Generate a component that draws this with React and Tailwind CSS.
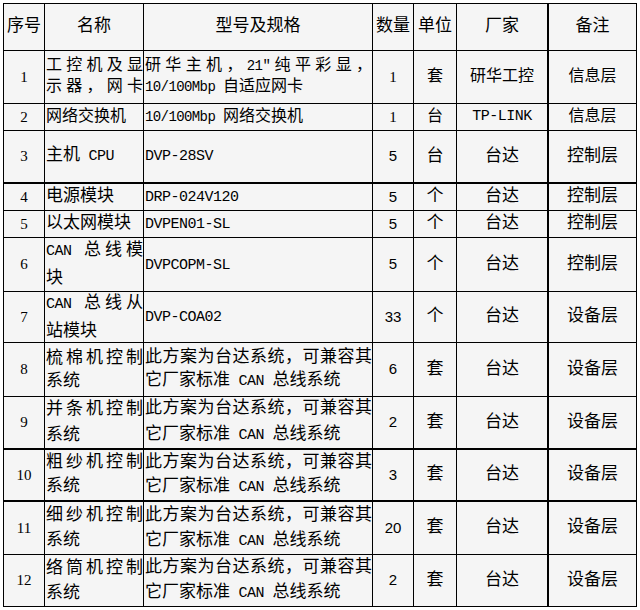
import React from "react";

const FONT = { fontFamily: '"Liberation Mono", "Noto Sans CJK SC", monospace' };

// split text into ASCII runs (rendered smaller in mono) and CJK runs
function Mix({ s, cls }) {
  const parts = s.split(/([\x00-\x7F\u2033]+)/);
  return (
    <>
      {parts.map((p, i) =>
        p === "" ? null : /[\x00-\x7F\u2033]/.test(p) ? (
          <span key={i} className={cls}>
            {p}
          </span>
        ) : (
          <React.Fragment key={i}>{p}</React.Fragment>
        )
      )}
    </>
  );
}

const rows = [
  {
    no: "1",
    name: [["工控机及显", 1], ["示器，网卡", 1]],
    spec: [["研华主机，21″纯平彩显，", 1], ["10/100Mbp 自适应网卡", 0]],
    qty: "1",
    unit: "套",
    maker: "研华工控",
    note: "信息层",
    small: true,
    lead: "leading-[21px]",
  },
  {
    no: "2",
    name: [["网络交换机", 0]],
    spec: [["10/100Mbp 网络交换机", 0]],
    qty: "1",
    unit: "台",
    maker: "TP-LINK",
    note: "信息层",
    small: true,
  },
  { no: "3", name: [["主机 CPU", 0]], spec: [["DVP-28SV", 0]], qty: "5", unit: "台", maker: "台达", note: "控制层", thick: true },
  { no: "4", name: [["电源模块", 0]], spec: [["DRP-024V120", 0]], qty: "5", unit: "个", maker: "台达", note: "控制层" },
  { no: "5", name: [["以太网模块", 0]], spec: [["DVPEN01-SL", 0]], qty: "5", unit: "个", maker: "台达", note: "控制层" },
  {
    no: "6",
    name: [["CAN 总线模", 1], ["块", 0]],
    spec: [["DVPCOPM-SL", 0]],
    qty: "5",
    unit: "个",
    maker: "台达",
    note: "控制层",
    lead: "leading-[27px]",
  },
  {
    no: "7",
    name: [["CAN 总线从", 1], ["站模块", 0]],
    spec: [["DVP-COA02", 0]],
    qty: "33",
    unit: "个",
    maker: "台达",
    note: "设备层",
    lead: "leading-[27px]",
  },
  {
    no: "8",
    name: [["梳棉机控制", 1], ["系统", 0]],
    spec: [["此方案为台达系统，可兼容其", 1], ["它厂家标准 CAN 总线系统", 0]],
    qty: "6",
    unit: "套",
    maker: "台达",
    note: "设备层",
    lead: "leading-[23px]",
  },
  {
    no: "9",
    name: [["并条机控制", 1], ["系统", 0]],
    spec: [["此方案为台达系统，可兼容其", 1], ["它厂家标准 CAN 总线系统", 0]],
    qty: "2",
    unit: "套",
    maker: "台达",
    note: "设备层",
    thick: true,
    lead: "leading-[26px]",
  },
  {
    no: "10",
    name: [["粗纱机控制", 1], ["系统", 0]],
    spec: [["此方案为台达系统，可兼容其", 1], ["它厂家标准 CAN 总线系统", 0]],
    qty: "3",
    unit: "套",
    maker: "台达",
    note: "设备层",
    thick: true,
    lead: "leading-[24px]",
  },
  {
    no: "11",
    name: [["细纱机控制", 1], ["系统", 0]],
    spec: [["此方案为台达系统，可兼容其", 1], ["它厂家标准 CAN 总线系统", 0]],
    qty: "20",
    unit: "套",
    maker: "台达",
    note: "设备层",
    lead: "leading-[25px]",
  },
  {
    no: "12",
    name: [["络筒机控制", 1], ["系统", 0]],
    spec: [["此方案为台达系统，可兼容其", 1], ["它厂家标准 CAN 总线系统", 0]],
    qty: "2",
    unit: "套",
    maker: "台达",
    note: "设备层",
    lead: "leading-[25px]",
  },
];

function Lines({ lines, cls, lead }) {
  return (
    <div className={"w-full " + (lead || "leading-[24px]")}>
      {lines.map(([t, j], i) => (
        <div key={i} className={j ? "whitespace-nowrap text-justify [text-align-last:justify]" : "whitespace-nowrap"}>
          <Mix s={t} cls={cls} />
        </div>
      ))}
    </div>
  );
}

export default function App() {
  const cell = "flex items-center border-r border-b border-black overflow-hidden";
  return (
    <div className="min-h-[610px] w-[640px] bg-white pl-[3px] pt-[3px] text-black" style={FONT}>
      <div className="grid w-[634px] grid-cols-[41px_99px_229px_41px_43px_92px_88px] grid-rows-[47px_53px_27px_53px_27px_27px_54px_51px_54px_53px_52px_53px_52px] border-l border-t border-black bg-[#f5f5f5] text-[17px]">
        {/* header */}
        <div className={cell + " justify-center"}>序号</div>
        <div className={cell + " justify-center"}>名称</div>
        <div className={cell + " justify-center"}>型号及规格</div>
        <div className={cell + " justify-center"}>数量</div>
        <div className={cell + " justify-center"}>单位</div>
        <div className={cell + " justify-center border-r-2"}>厂家</div>
        <div className={cell + " justify-center"}>备注</div>
        {rows.map((r) => {
          const b = r.thick ? " border-b-2" : "";
          const sz = r.small ? " text-[16px]" : "";
          const lat = r.small ? "text-[14px] tracking-[-0.6px]" : "text-[15px] tracking-[-0.5px]";
          return (
            <React.Fragment key={r.no}>
              <div className={cell + b + " justify-center text-[15px]"} style={{ fontFamily: '"Liberation Serif", serif' }}>
                {r.no}
              </div>
              <div className={cell + b + sz + " pl-px"}>
                <Lines lines={r.name} cls="text-[15px] tracking-[-0.5px]" lead={r.lead} />
              </div>
              <div className={cell + b + sz + " pl-px"}>
                <Lines lines={r.spec} cls={lat} lead={r.lead} />
              </div>
              <div
                className={cell + b + " justify-center text-[15px]"}
                style={{ fontFamily: r.small ? '"Liberation Serif", serif' : '"Liberation Sans", sans-serif' }}
              >
                {r.qty}
              </div>
              <div className={cell + b + sz + " justify-center"}>{r.unit}</div>
              <div className={cell + b + sz + " justify-center border-r-2"}>
                <Mix s={r.maker} cls="text-[15px] tracking-[-0.5px]" />
              </div>
              <div className={cell + b + sz + " justify-center"}>{r.note}</div>
            </React.Fragment>
          );
        })}
      </div>
    </div>
  );
}
